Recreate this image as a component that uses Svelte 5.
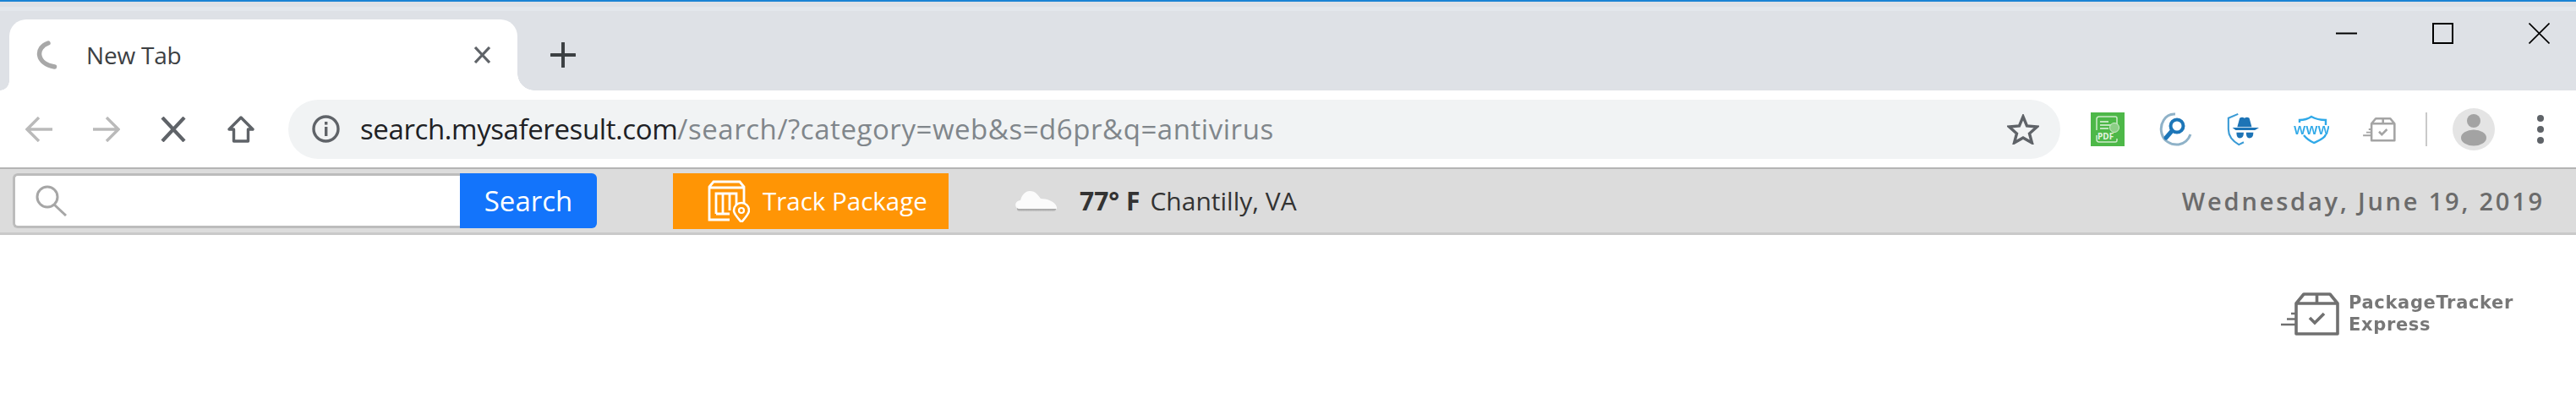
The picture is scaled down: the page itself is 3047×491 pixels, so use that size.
<script>
  const urlHost = 'search.mysaferesult.com';
  const urlPath = '/search/?category=web&s=d6pr&q=antivirus';
</script>

{#snippet boxIcon(w)}
  <path d="M38 31 L47 20 H78 L87 31 V67 H38 Z M38 31 H87 M62.5 20 V31" fill="none" stroke="currentColor" stroke-width={w} stroke-linejoin="round"/>
  <path d="M54 48 L60 54 L71 43" fill="none" stroke="currentColor" stroke-width={w}/>
  <path d="M20 56 H37 M27 49.500 H37 M32 43 H37" fill="none" stroke="currentColor" stroke-width={w * 0.75}/>
{/snippet}

<div class="page">
  <header class="strip">
    <div class="tab">
      <svg class="spinner" viewBox="0 0 25 34"><path d="M14 3 C-1 8 -1 27 21.500 31" fill="none" stroke="#a8a8a8" stroke-width="5.500" stroke-linecap="round"/></svg>
      <span class="tab-title">New Tab</span>
      <svg class="tab-close" viewBox="0 0 21 20"><path d="M2 1 L19 19 M19 1 L2 19" stroke="#5f6368" stroke-width="3.200"/></svg>
    </div>
    <svg class="plus" viewBox="0 0 30 30"><path d="M15 1 V29 M1 15 H29" stroke="#3c4043" stroke-width="4" stroke-linecap="round"/></svg>
    <div class="win">
      <svg class="win-min" viewBox="0 0 25 25"><path d="M0 12.500 H25" stroke="#000" stroke-width="2"/></svg>
      <svg class="win-max" viewBox="0 0 25 25"><rect x="1" y="1" width="23" height="23" fill="none" stroke="#000" stroke-width="2"/></svg>
      <svg class="win-close" viewBox="0 0 25 25"><path d="M0.500 0.500 L24.500 24.500 M24.500 0.500 L0.500 24.500" stroke="#000" stroke-width="1.600"/></svg>
    </div>
  </header>

  <nav class="toolbar">
    <svg class="nav back" viewBox="0 0 32 30"><path d="M32 15 H3 M16 1 L2 15 L16 29" fill="none" stroke="#bababa" stroke-width="3.400"/></svg>
    <svg class="nav fwd" viewBox="0 0 32 30"><path d="M0 15 H29 M16 1 L30 15 L16 29" fill="none" stroke="#bababa" stroke-width="3.400"/></svg>
    <svg class="nav stop" viewBox="0 0 30 30"><path d="M2 1 L28 29 M28 1 L2 29" stroke="#5f6368" stroke-width="4.200"/></svg>
    <svg class="nav home" viewBox="0 0 32 32"><path d="M16 2 L30 16 H24.500 V30 H7.500 V16 H2 Z" fill="none" stroke="#5f6368" stroke-width="3.400" stroke-linejoin="round"/></svg>

    <div class="omni">
      <svg class="info" viewBox="0 0 33 33"><circle cx="16.500" cy="16.500" r="14.500" fill="none" stroke="#5f6368" stroke-width="3.400"/><rect x="15" y="14" width="3.400" height="11" fill="#5f6368"/><rect x="15" y="8" width="3.400" height="3.600" fill="#5f6368"/></svg>
      <span class="url"><span class="host">{urlHost}</span><span class="path">{urlPath}</span></span>
      <svg class="star" viewBox="0 0 38 36"><path d="M19 3 L23.500 14 L35.500 15 L26.500 23 L29.500 34 L19 28 L8.500 34 L11.500 23 L2.500 15 L14.500 14 Z" fill="none" stroke="#5f6368" stroke-width="3.400" stroke-linejoin="miter"/></svg>
    </div>

    <div class="exts">
      <svg class="ext" viewBox="0 0 40 40">
        <rect width="40" height="40" fill="#4db848"/>
        <path d="M31 20 V7 Q31 5 29 5 H10 Q7 5 7 8 V21 M7 27 V32 Q7 35 10 35 H29 Q31 35 31 33 V31" fill="none" stroke="#cdeac9" stroke-width="1.500"/>
        <path d="M11 11 H21 M11 15 H25 M11 19 H21" stroke="#e4f4e2" stroke-width="1.600"/>
        <circle cx="28" cy="18" r="5.500" fill="#8ccf86" stroke="#cdeac9"/>
        <text x="8" y="32" class="pdf">PDF</text>
      </svg>
      <svg class="ext soft" viewBox="0 0 40 40">
        <path d="M20 2 C8 1 1 14 4 25 C6 33 14 39 24 38 C30 37 35 34 38 26" fill="none" stroke="#8fb2c8" stroke-width="3"/>
        <circle cx="22" cy="16" r="7.500" fill="none" stroke="#1d76b8" stroke-width="4"/>
        <path d="M16 22 L9 30" stroke="#1d76b8" stroke-width="5" stroke-linecap="round"/>
      </svg>
      <svg class="ext soft" viewBox="0 0 42 40">
        <path d="M15 1 L3 6 V20 C3 29 9 35 16 39 L22 36" fill="none" stroke="#3a9bd6" stroke-width="2.200"/>
        <path d="M14 17 L17 6 Q20 4 23 6 Q26 4 29 6 L32 17 Z M8 18 H41 L36 21 H12 Z" fill="#1d74b6"/>
        <path d="M13 24 H22 Q22 31 17 31 Q13 31 13 24 Z M25 24 H34 Q34 31 29 31 Q25 31 25 24 Z" fill="#1d74b6"/>
      </svg>
      <svg class="ext soft wide" viewBox="0 0 42 40">
        <path d="M7 12 V9 Q15 9 21 5 Q28 9 38 9 V26 C37 31 28 34 24 36 Q17 33 12 27" fill="none" stroke="#30a9e8" stroke-width="2.400"/>
        <rect x="0" y="15" width="42" height="11" fill="#fff"/>
        <text x="0" y="25.500" class="www">www</text>
      </svg>
      <svg class="ext soft gray" viewBox="18 16 72 54">{@render boxIcon(4.6)}</svg>
      <span class="sep"></span>
      <svg class="avatar" viewBox="0 0 50 50">
        <circle cx="25" cy="25" r="25" fill="#e4e4e4"/>
        <circle cx="25" cy="15" r="8" fill="#a3a3a3"/>
        <ellipse cx="25" cy="35" rx="15" ry="9.500" fill="#a3a3a3"/>
      </svg>
      <span class="kebab"><i></i><i></i><i></i></span>
    </div>
  </nav>

  <section class="infobar">
    <form class="search" onsubmit={(e) => e.preventDefault()}>
      <div class="field">
        <svg class="glass" viewBox="0 0 37 37"><circle cx="14" cy="14" r="12" fill="none" stroke="#a6a6a6" stroke-width="3"/><path d="M22 23 L36 36" stroke="#a6a6a6" stroke-width="3"/></svg>
      </div>
      <button type="button" class="go">Search</button>
    </form>

    <a class="track" href="#track">
      <svg class="track-icon" viewBox="0 0 50 50">
        <path d="M26 47 H2 V8 L7 2 H38 L43 8 V29 M2 9 H43" fill="none" stroke="#fff" stroke-width="2.800"/>
        <path d="M10 40 V16 H34 V30 M10 40 H26 M18 16 V40 M26 16 V36" fill="none" stroke="#fff" stroke-width="2.800"/>
        <path d="M40 50 C35 44 31 40 31 36 A9 9 0 0 1 49 36 C49 40 45 44 40 50 Z" fill="#ff9505" stroke="#fff" stroke-width="2.600"/>
        <circle cx="40" cy="36" r="3" fill="none" stroke="#fff" stroke-width="2.200"/>
      </svg>
      <span>Track Package</span>
    </a>

    <div class="weather">
      <svg class="cloud" viewBox="0 0 50 26">
        <defs><linearGradient id="cl" x1="0" y1="0" x2="0" y2="1"><stop offset="0" stop-color="#777"/><stop offset="1" stop-color="#c8c8c8"/></linearGradient></defs>
        <rect x="3" y="19" width="46" height="6" rx="3" fill="url(#cl)"/>
        <path d="M6 22 C0 22 -1 13 7 12 C9 5 13 1 18 1 C25 1 28 6 31 10 C38 10 48 13 50 20 L50 22 Z" fill="#fbfbfb"/>
      </svg>
      <b>77° F</b>
      <span>Chantilly, VA</span>
    </div>

    <div class="date">Wednesday, June 19, 2019</div>
  </section>

  <main class="content">
    <div class="logo">
      <svg class="logo-icon" viewBox="18 16 72 54">{@render boxIcon(3.6)}</svg>
      <div class="logo-text">PackageTracker<br />Express</div>
    </div>
  </main>
</div>

<style>
  :global(body) { margin: 0; background: #fff; }
  .page { width: 3047px; height: 491px; overflow: hidden; font-family: "Open Sans", "Noto Sans", sans-serif; display: flex; flex-direction: column; }

  .strip { height: 105px; border-top: 2px solid #1a83d4; background: linear-gradient(#dee1e6 6px, #e3e7ec 6px, #e3e7ec 11px, #dee1e6 11px); display: flex; align-items: flex-end; flex: none; position: relative; }
  .tab { position: relative; margin-left: 11px; width: 601px; height: 84px; background: #fff; border-radius: 20px 20px 0 0; display: flex; align-items: center; padding: 0 31px 0 32px; box-sizing: border-box; flex: none; }
  .tab::before, .tab::after { content: ""; position: absolute; bottom: 0; width: 20px; height: 20px; }
  .tab::before { left: -11px; width: 11px; height: 11px; background: radial-gradient(circle at 0 0, #dee1e6 10.500px, #fff 11px); }
  .tab::after { right: -20px; background: radial-gradient(circle at 100% 0, #dee1e6 19.500px, #fff 20px); }
  .spinner { width: 25px; height: 34px; flex: none; }
  .tab-title { margin-left: 34px; font-size: 28px; letter-spacing: -0.2px; color: #3c4043; flex: 1; }
  .tab-close { width: 21px; height: 20px; flex: none; }
  .plus { width: 30px; height: 30px; margin: 0 0 27px 39px; flex: none; }
  .win { margin-left: auto; align-self: flex-start; display: flex; margin-top: 25px; margin-right: 31px; gap: 89px; }
  .win svg { width: 25px; height: 25px; display: block; }

  .toolbar { height: 91px; flex: none; background: #fff; border-bottom: 2px solid #b4b4b4; display: flex; align-items: center; box-sizing: content-box; }
  .nav { display: block; flex: none; }
  .back { width: 32px; height: 30px; margin-left: 30px; }
  .fwd { width: 32px; height: 30px; margin-left: 48px; }
  .stop { width: 30px; height: 30px; margin-left: 48px; }
  .home { width: 32px; height: 32px; margin-left: 49px; }

  .omni { margin-left: 40px; width: 2096px; height: 70px; flex: none; border-radius: 35px; background: #f1f3f4; display: flex; align-items: center; box-sizing: border-box; padding: 0 25px 0 28px; }
  .info { width: 33px; height: 33px; flex: none; }
  .url { margin-left: 24px; font-size: 33px; white-space: nowrap; flex: 1; }
  .host { color: #202124; letter-spacing: -0.4px; }
  .path { color: #80868b; letter-spacing: 0.55px; }
  .star { width: 38px; height: 36px; flex: none; }

  .exts { display: flex; align-items: center; margin-left: 36px; flex: none; }
  .ext { width: 40px; height: 40px; display: block; flex: none; margin-right: 40px; }
  .soft { filter: blur(0.5px); }
  .wide { width: 42px; margin-right: 39px; }
  .gray { color: #a4a4a4; height: 30px; margin-right: 35px; }
  .sep { width: 2px; height: 40px; background: #c9c9c9; flex: none; }
  .avatar { width: 50px; height: 50px; margin-left: 30px; flex: none; }
  .kebab { margin-left: 50px; display: flex; flex-direction: column; gap: 5px; }
  .kebab i { width: 8px; height: 8px; border-radius: 50%; background: #5f6368; display: block; }
  .pdf { font: 700 10px "Open Sans", sans-serif; fill: #e4f4e2; }
  .www { font: 600 17.500px "Open Sans", sans-serif; fill: #30a9e8; }

  .infobar { height: 75px; flex: none; background: #dcdcdc; border-bottom: 3px solid #c9c9c9; display: flex; align-items: center; }
  .search { display: flex; margin-left: 15px; height: 65px; flex: none; }
  .field { width: 529px; box-sizing: border-box; background: #fff; border: 3px solid #bcbcbc; border-right: 0; border-radius: 6px 0 0 6px; display: flex; align-items: center; padding-left: 24px; }
  .glass { width: 37px; height: 37px; }
  .go { width: 162px; border: 0; padding: 0; background: #1374fb; color: #fff; font: 400 33px "Open Sans", sans-serif; border-radius: 0 6px 6px 0; }
  .track { margin-left: 90px; width: 326px; height: 66px; flex: none; box-sizing: border-box; padding-left: 41px; background: #ff9505; color: #fff; font-size: 29.500px; text-decoration: none; display: flex; align-items: center; gap: 15px; }
  .track-icon { width: 50px; height: 50px; flex: none; }
  .weather { margin-left: 78px; display: flex; align-items: center; color: #333; flex: none; font-size: 30px; }
  .cloud { width: 50px; height: 26px; margin-right: 27px; filter: blur(0.6px); }
  .weather b { font-weight: 700; margin-right: 12px; }
  .date { margin-left: auto; margin-right: 37px; font-size: 29px; font-weight: 600; letter-spacing: 2.800px; color: #6b6b6b; }

  .content { flex: 1; display: flex; justify-content: flex-end; align-items: flex-start; padding: 66px 74px 0 0; background: #fff; }
  .logo { display: flex; align-items: center; gap: 10px; filter: blur(0.7px); }
  .logo-icon { width: 72px; height: 54px; color: #707070; }
  .logo-text { font: 700 21px/26px "DejaVu Sans", sans-serif; letter-spacing: 0.65px; color: #777; }
</style>
